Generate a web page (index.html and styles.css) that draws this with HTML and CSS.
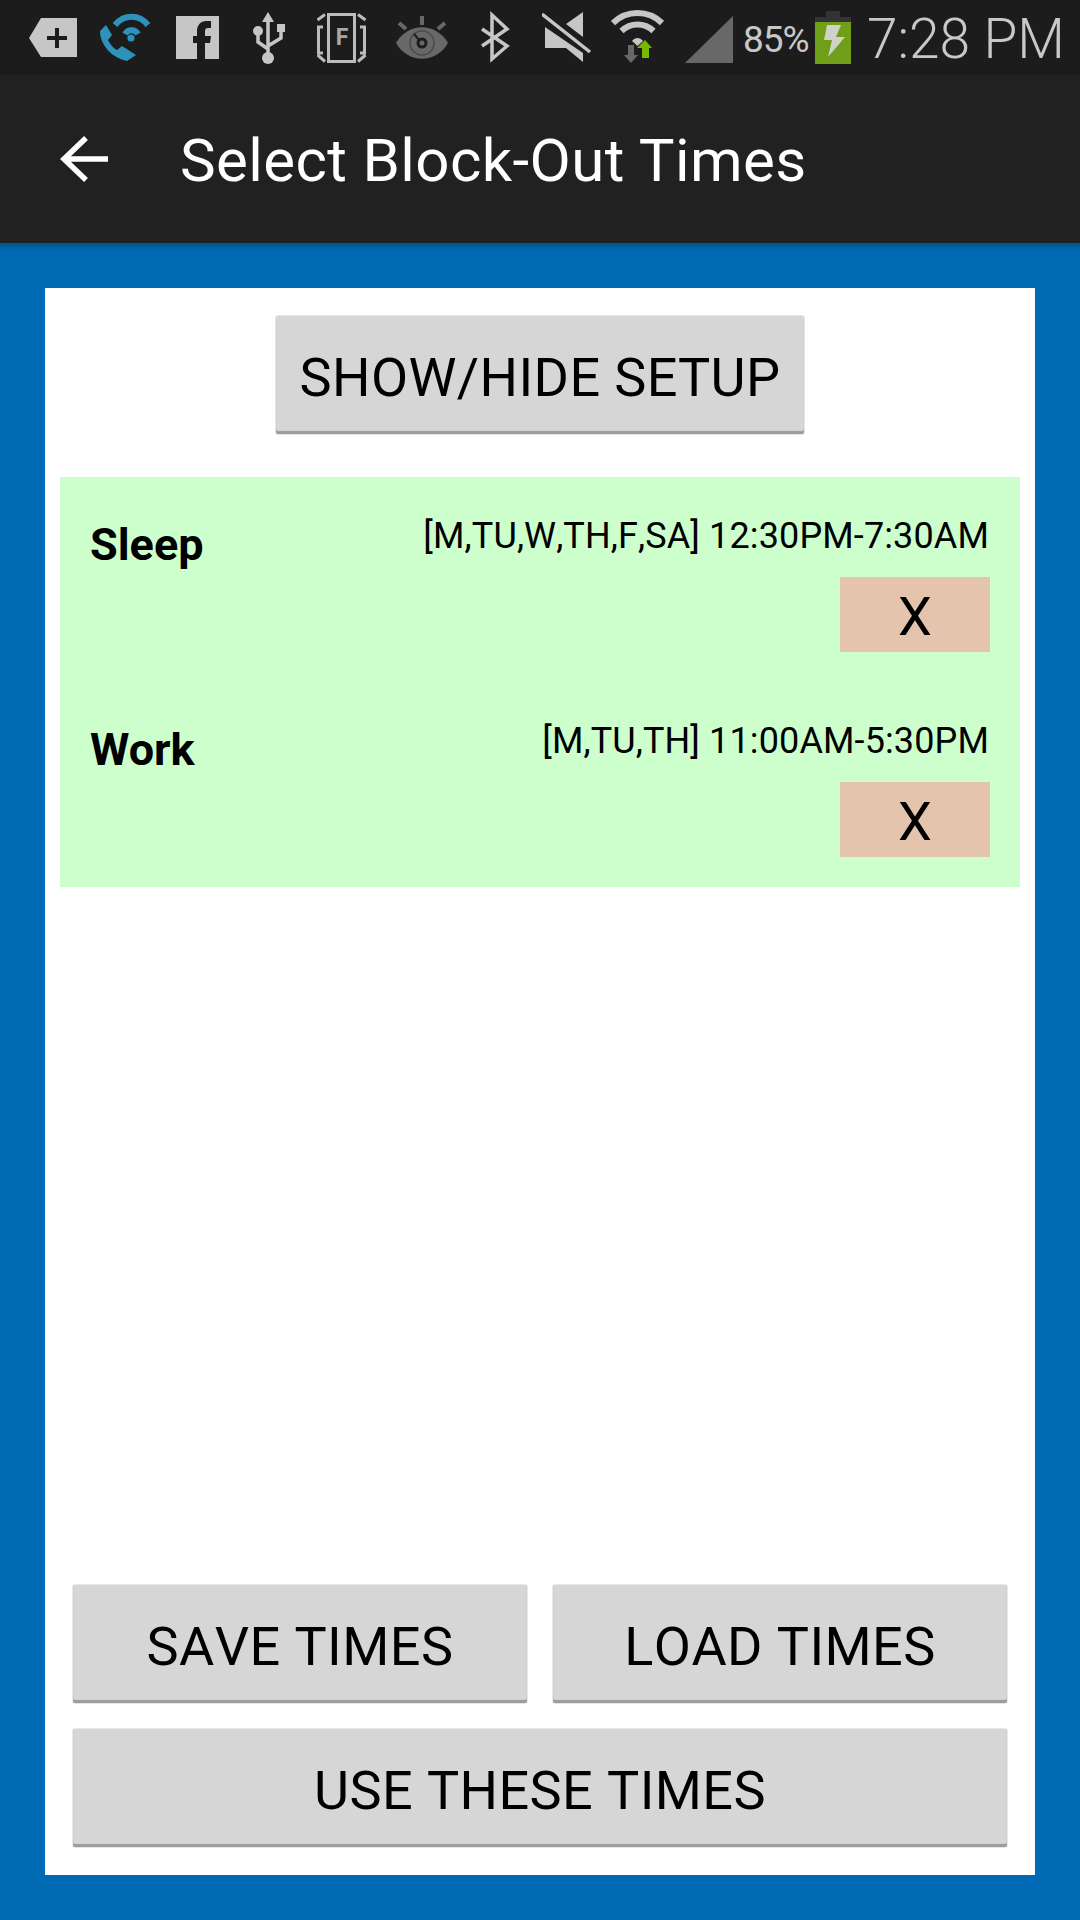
FILE: index.html
```html
<!DOCTYPE html>
<html lang="en">
<head>
<meta charset="utf-8">
<title>Select Block-Out Times</title>
<link rel="stylesheet" href="styles.css">
</head>
<body>
<div class="screen">
  <header class="status">
    <svg class="ic s-tag" viewBox="29 0 70 75"><path class="lt" d="M29 38 41 18H77V57H41Z"/><path class="dk" d="M55 28h4v8h8v4h-8v8h-4v-8h-8v-4h8z"/></svg>
    <svg class="ic s-call" viewBox="99 0 77 75"><path class="bl" d="M106 25 100 31C100 45 112 58 127 61L136 55 122 46 117 50C113 48 110 44 108 40L112 35Z"/><path class="blw" d="M115 25C124 14 139 14 148 25M125 34C128 29 135 29 138 34"/><circle class="bl" cx="131" cy="38" r="3.6"/></svg>
    <svg class="ic s-fb" viewBox="176 0 77 75"><rect class="lt" x="176" y="16" width="43" height="43"/><path class="dk" d="M197 59V43H193V36H197V31C197 25 201 21 206 21H211V28H208C206 28 205 29 205 31V36H211L210 43H205V59Z"/></svg>
    <svg class="ic s-usb" viewBox="253 0 64 75"><path class="lt" d="M268 12 274 22H262Z"/><path class="ls" d="M268 21V54M258 31V42L268 49M281 30V38L268 46"/><circle class="lt" cx="268" cy="58" r="6"/><circle class="lt" cx="258" cy="31" r="5"/><rect class="lt" x="277" y="24" width="8" height="8"/></svg>
    <svg class="ic s-frame" viewBox="317 0 79 75"><rect class="ln" x="328.500" y="14.500" width="26" height="47"/><text class="frame-f" x="342" y="45" text-anchor="middle">F</text><path class="ln" d="M323 27H318.500V53H323M360 27H364.500V53H360M317.500 20 325 14.500M365.500 20 358 14.500M317.500 55 325 61.500M365.500 55 358 61.500"/></svg>
    <svg class="ic s-eye" viewBox="396 0 85 75"><path class="gr" d="M396 43C408 22 436 22 448 43 436 64 408 64 396 43Z"/><circle class="ring" cx="422" cy="43" r="12"/><circle class="ring2" cx="422" cy="43" r="4"/><path class="gs" d="M422 16V25M399 23 406 29M445 23 438 29"/><path class="ptr" d="M414 34 420 41"/></svg>
    <svg class="ic s-bt" viewBox="481 0 61 75"><path class="ls" d="M482 29 507 46 492 59V15L507 29 482 46"/></svg>
    <svg class="ic s-mute" viewBox="542 0 69 75"><path class="lt" d="M583 12 566 24 583 37ZM545 27 583 53V62L566 48H545Z"/><path class="ls" d="M542 14 590 52"/></svg>
    <svg class="ic s-wifi" viewBox="611 0 74 75"><path class="wa" d="M613 23A35 35 0 0 1 662 23M621.500 31A23 23 0 0 1 653.500 31"/><path class="lt" d="M632 41C635 37 640 37 643 41L637.500 46Z"/><path class="gr" d="M628 45H634V55H638L631 63 624 55H628Z"/><path class="gn" d="M642 58V48H637L645 40 652 48H649V58Z"/></svg>
    <svg class="ic s-signal" viewBox="685 0 59 75"><path class="gr" d="M685 63 733 16V63Z"/></svg>
    <span class="batt-pct">85%</span>
    <svg class="ic s-batt" viewBox="815 0 52 75"><path class="bt" d="M826 11H840V17H851V22H815V17H826Z"/><rect class="gn2" x="815" y="22" width="36" height="42"/><path class="bolt" d="M827 25H841L836 37H845L828 57 832 40H824Z"/></svg>
    <span class="clock">7:28 PM</span>
  </header>

  <nav class="actionbar">
    <svg class="back" viewBox="0 0 48 48" aria-hidden="true"><path d="M48 24H4M26 3 4 24 26 45"/></svg>
    <h1 class="title">Select Block-Out Times</h1>
  </nav>

  <main class="stage">
    <section class="card">
      <div class="setup-wrap"><button class="btn btn-setup">SHOW/HIDE SETUP</button></div>
      <div class="list">
        <div class="item">
          <div class="name">Sleep</div>
          <div class="detail">
            <div class="when">[M,TU,W,TH,F,SA] 12:30PM-7:30AM</div>
            <button class="remove">X</button>
          </div>
        </div>
        <div class="item">
          <div class="name">Work</div>
          <div class="detail">
            <div class="when">[M,TU,TH] 11:00AM-5:30PM</div>
            <button class="remove">X</button>
          </div>
        </div>
      </div>
      <div class="actions">
        <button class="btn">SAVE TIMES</button>
        <button class="btn">LOAD TIMES</button>
        <button class="btn btn-wide">USE THESE TIMES</button>
      </div>
    </section>
  </main>
</div>
</body>
</html>
```

FILE: styles.css
```css
* { box-sizing: border-box; }
html, body { margin: 0; padding: 0; }
body { font-family: Roboto, "Liberation Sans", sans-serif; color: #000; }
.screen { width: 1080px; height: 1920px; display: flex; flex-direction: column; background: #0069b3; overflow: hidden; }

.status { height: 75px; flex: none; background: #1c1c1c; display: flex; align-items: center; padding-left: 29px; }
.ic { height: 75px; flex: none; display: block; }
.s-tag { width: 70px; }
.s-call { width: 77px; }
.s-fb { width: 77px; }
.s-usb { width: 64px; }
.s-frame { width: 79px; }
.s-eye { width: 85px; }
.s-bt { width: 61px; }
.s-mute { width: 69px; }
.s-wifi { width: 74px; }
.s-signal { width: 59px; }
.s-batt { width: 52px; }
.batt-pct { width: 71px; font-size: 37px; color: #c8c8c8; line-height: 75px; letter-spacing: -1px; padding-top: 4px; margin-left: -1px; margin-right: 1px; }
.clock { font-size: 55px; font-weight: 300; color: #c8c8c8; line-height: 75px; white-space: nowrap; padding-top: 4px; }

.lt { fill: #c6c6c6; }
.dk { fill: #1c1c1c; }
.bl { fill: #2d93bd; }
.blw { fill: none; stroke: #2d93bd; stroke-width: 6; }
.ls { fill: none; stroke: #c6c6c6; stroke-width: 3.500; }
.ln { fill: none; stroke: #bcbcbc; stroke-width: 3; }
.frame-f { font-family: Roboto, sans-serif; font-size: 23px; font-weight: 700; fill: #a8a8a8; }
.gr { fill: #686868; }
.gs { fill: none; stroke: #686868; stroke-width: 4; }
.ring { fill: none; stroke: #4a4a4a; stroke-width: 1.500; }
.ring2 { fill: #686868; stroke: #1c1c1c; stroke-width: 3; }
.ptr { fill: none; stroke: #1c1c1c; stroke-width: 2; }
.wa { fill: none; stroke: #c6c6c6; stroke-width: 6; }
.gn { fill: #76b900; }
.gn2 { fill: #6f9e18; }
.bt { fill: #333; }
.bolt { fill: #cfd2c8; }

.actionbar { height: 168px; flex: none; background: #212121; display: flex; align-items: center; padding-left: 60px; }
.back { width: 48px; height: 48px; flex: none; margin-right: 74px; overflow: visible; }
.back path { fill: none; stroke: #fff; stroke-width: 5.500; }
.title { margin: 0; font-size: 60px; font-weight: 400; color: #fff; white-space: nowrap; letter-spacing: 0.4px; padding-top: 2px; margin-left: -2px; }

.stage { flex: 1; padding: 45px; background: linear-gradient(#00568f, #0069b3 8px) #0069b3; display: flex; min-height: 0; }
.card { flex: 1; background: #fff; padding: 27px 15px; display: flex; flex-direction: column; }
.setup-wrap { display: flex; justify-content: center; }

.btn { height: 120px; border: 1px solid rgba(214,214,214,.55); background: #d6d6d6 padding-box; border-radius: 3px; box-shadow: inset 0 -3px 1px #9c9c9c; font-family: inherit; font-size: 54px; letter-spacing: 0.42px; font-kerning: none; color: #000; padding: 4px 23px 0; }
.btn-wide { grid-column: 1 / -1; }

.list { margin-top: 42px; background: #ccffcc; }
.item { height: 205px; display: flex; justify-content: space-between; padding: 30px; }
.name { font-size: 45px; font-weight: 700; margin-top: 11px; }
.detail { display: flex; flex-direction: column; align-items: flex-end; justify-content: space-between; }
.when { font-size: 36px; line-height: 42px; margin-top: 8px; margin-right: 1px; font-kerning: none; letter-spacing: 0.13px; }
.remove { width: 150px; height: 75px; border: 0; background: #e4c4ac; font-family: inherit; font-size: 54px; color: #000; padding: 4px 0 0; }

.actions { margin-top: auto; padding: 0 12px; display: grid; grid-template-columns: 1fr 1fr; gap: 24px; }
```
